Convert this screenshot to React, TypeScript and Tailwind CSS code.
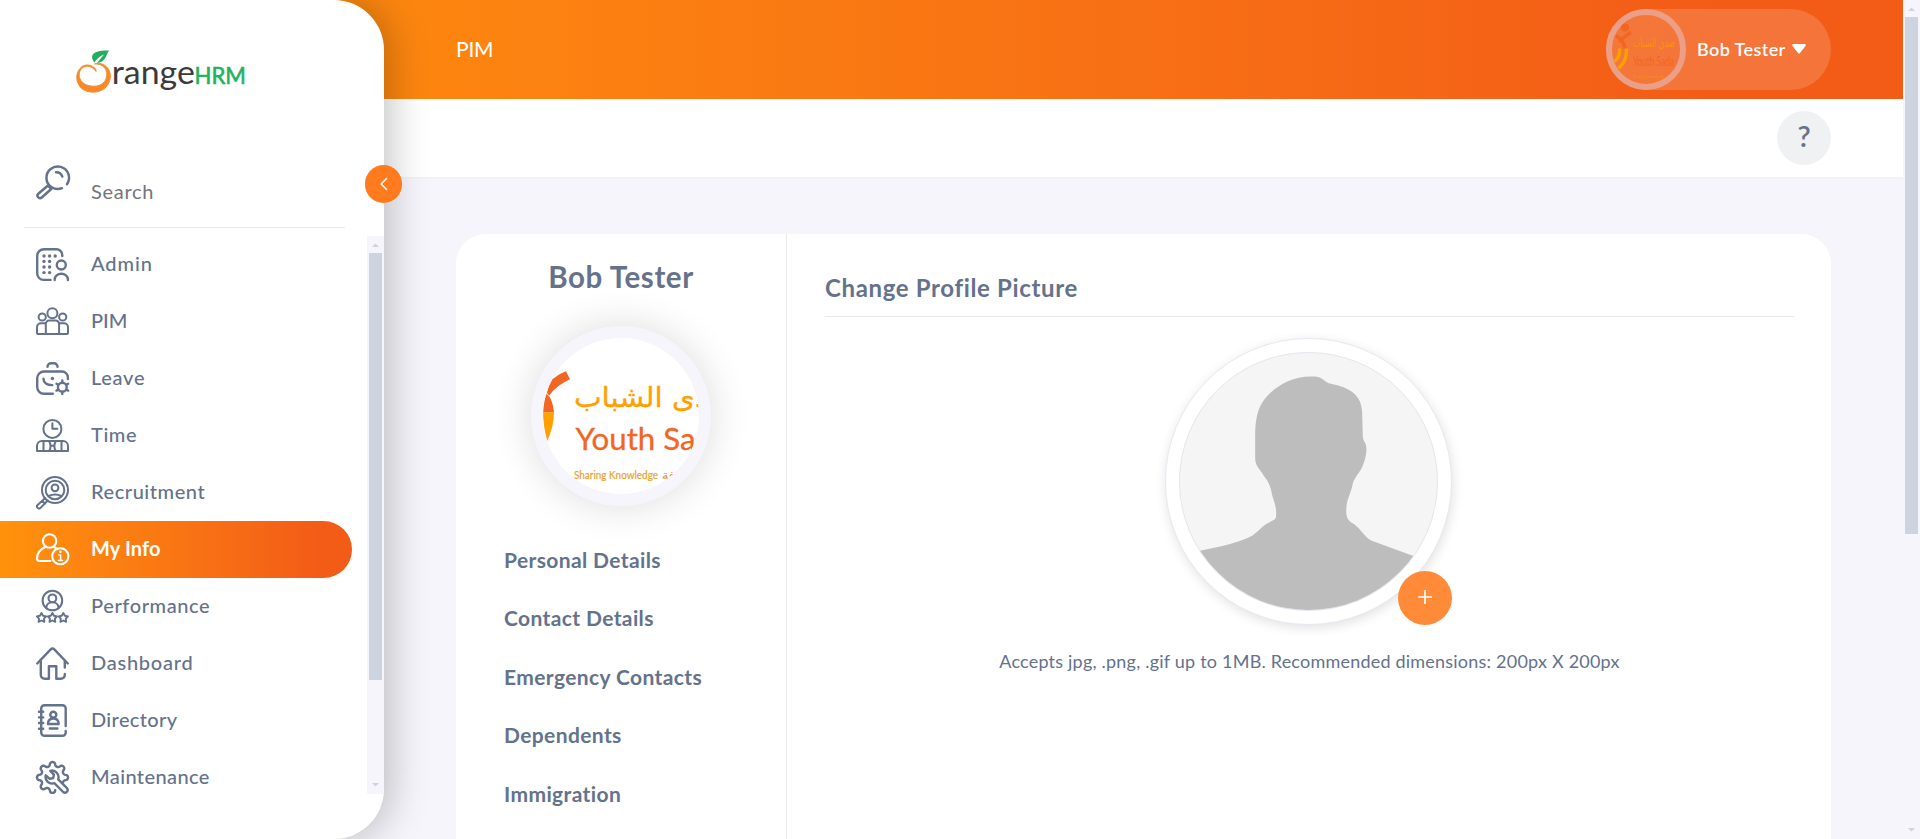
import type { ReactNode } from "react";

const polar = (cx: number, cy: number, r: number, a: number) =>
  `${(cx + r * Math.cos(a)).toFixed(2)} ${(cy + r * Math.sin(a)).toFixed(2)}`;

const star = (cx: number, cy: number, outer: number, inner: number, points: number) =>
  "M" +
  Array.from({ length: points * 2 }, (_, i) =>
    polar(cx, cy, i % 2 ? inner : outer, -Math.PI / 2 + (i * Math.PI) / points)
  ).join("L") +
  "Z";

const cog =
  "M" +
  Array.from({ length: 131 }, (_, i) => {
    const a = ((78 + i * 2.35) * Math.PI) / 180;
    const wave = Math.cos(8 * (a + Math.PI / 2));
    return polar(16.5, 16.5, 13.5 + 2 * Math.sign(wave) * Math.pow(Math.abs(wave), 0.55), a);
  }).join("L");

function Icon({ children, w = 2 }: { children: ReactNode; w?: number }) {
  return (
    <svg
      className="h-[33px] w-[33px] shrink-0 overflow-visible"
      viewBox="0 0 33 33"
      fill="none"
      stroke="currentColor"
      strokeWidth={w}
      strokeLinecap="round"
      strokeLinejoin="round"
    >
      {children}
    </svg>
  );
}

const SearchIcon = () => (
  <Icon w={2.5}>
    <path d="M31 18.2A11.3 11.3 0 1 0 26 22.2" />
    <path d="M20 6.2q5 0 6.3 4.3" />
    <path d="M12 19.5L2 28a2.6 2.6 0 0 0 3.8 3.5L15.500 22.800M12 19.500l3 3.300" />
  </Icon>
);

const items: { label: string; tracking: string; icon: ReactNode }[] = [
  {
    label: "Admin",
    tracking: "tracking-[0.9px]",
    icon: (
      <Icon w={2.4}>
        <path d="M26.3 8V7.200a6 6 0 0 0-6-6H8a6.800 6.800 0 0 0-6.800 6.800V25.500A6.400 6.400 0 0 0 7.600 31.900H14.500" />
        <circle cx="25.300" cy="17" r="4.500" />
        <path d="M18.700 32v-.7a6.600 5.600 0 0 1 13.200 0v.7" />
        <g fill="currentColor" stroke="none">
          {[[8, 8], [13.6, 8], [19.2, 8], [8, 13.4], [13.6, 13.4], [8, 19], [13.6, 19], [8, 24.6], [13.6, 24.6]].map(([x, y]) => (
            <circle key={`${x}-${y}`} cx={x} cy={y} r="1.700" />
          ))}
        </g>
      </Icon>
    ),
  },
  {
    label: "PIM",
    tracking: "tracking-[0px]",
    icon: (
      <Icon w={2}>
        <circle cx="16.400" cy="8.200" r="5" />
        <circle cx="6.200" cy="12" r="3.600" />
        <circle cx="26.700" cy="12" r="3.600" />
        <path d="M9.800 29V19a3.500 3.500 0 0 1 3.500-3.500h6.300A3.500 3.500 0 0 1 23.100 19V29" />
        <path d="M9.800 18.300H5a4 4 0 0 0-4 4V27.500q0 1.600 1.600 1.600H30.400q1.600 0 1.600-1.600V22.300a4 4 0 0 0-4-4H23.100" />
      </Icon>
    ),
  },
  {
    label: "Leave",
    tracking: "tracking-[0.7px]",
    icon: (
      <Icon w={2.4}>
        <path d="M11.500 4.800a3.500 3.500 0 0 1 3.500-3.500h3a3.500 3.500 0 0 1 3.500 3.500" />
        <path d="M31.900 17V15.500a6 6 0 0 0-6-6H8a6.800 6.800 0 0 0-6.800 6.800V25A6.800 6.800 0 0 0 8 31.800H16.800" />
        <path d="M7.500 16.800c0 4 3.500 6.300 8.800 6.300" />
        <circle cx="16.400" cy="16.500" r="1.700" fill="currentColor" stroke="none" />
        <circle cx="26.300" cy="25.200" r="4.400" />
        <path d="M26.300 20.500v-2M26.300 30v2M30.400 22.800l1.700-1M22.200 27.600l-1.700 1M30.400 27.600l1.700 1M22.200 22.800l-1.700-1" />
      </Icon>
    ),
  },
  {
    label: "Time",
    tracking: "tracking-[0.6px]",
    icon: (
      <Icon w={2}>
        <circle cx="16.400" cy="9.900" r="9" />
        <path d="M16.400 4.300v5.500h5" />
        <path d="M1 32V27a5 5 0 0 1 5-5H27a5 5 0 0 1 5 5V32Z" />
        <path d="M7.500 23V32M25.500 23V32M13.300 22.500q2.500 4.700 0 9.400M19.600 22.500q-2.500 4.700 0 9.400M14.800 26.800h3.300" />
      </Icon>
    ),
  },
  {
    label: "Recruitment",
    tracking: "tracking-[0.55px]",
    icon: (
      <Icon w={2}>
        <circle cx="19" cy="14" r="13" />
        <circle cx="19" cy="14" r="9.300" />
        <circle cx="19" cy="11.800" r="3.400" />
        <path d="M12.800 20q6.200-3 12.400 0" />
        <path d="M9.300 22L1.600 29a2 2 0 0 0 2.900 2.900L11.800 24.500M6.300 25l2.700 2.700" />
      </Icon>
    ),
  },
  {
    label: "My Info",
    tracking: "tracking-[0.1px]",
    icon: (
      <Icon w={2.1}>
        <circle cx="13.600" cy="8" r="6.700" />
        <path d="M9 14C4 16.500 1 21 1 25.500Q1 28 3.500 28H14.500M18 14q1.500.700 2.500 1.500" />
        <circle cx="24.300" cy="23.200" r="8.100" />
        <path d="M22.800 22h1.800v5.300M22.500 27.500h4" strokeWidth="1.600" />
        <circle cx="24.300" cy="18.800" r="1.400" fill="currentColor" stroke="none" />
      </Icon>
    ),
  },
  {
    label: "Performance",
    tracking: "tracking-[0.6px]",
    icon: (
      <Icon w={2}>
        <circle cx="16.400" cy="10.500" r="9.800" />
        <circle cx="16.400" cy="8.300" r="3.900" />
        <path d="M10.300 17.600c.5-7 11.700-7 12.200 0" />
        {[5.5, 16.4, 27.3].map((x) => (
          <path key={x} d={star(x, 27.9, 4.9, 2.6, 5)} strokeWidth="1.900" />
        ))}
      </Icon>
    ),
  },
  {
    label: "Dashboard",
    tracking: "tracking-[0.75px]",
    icon: (
      <Icon w={2.4}>
        <path d="M1.200 16.500L14.700 2.300q1.800-1.700 3.600 0L31.800 16.500" />
        <path d="M4.800 14V28a3.800 3.800 0 0 0 3.800 3.800H12.900V19.300h7.400V31.800H25a3.800 3.800 0 0 0 3.800-3.800V27M28.800 14V20.500" />
      </Icon>
    ),
  },
  {
    label: "Directory",
    tracking: "tracking-[0.35px]",
    icon: (
      <Icon w={2.4}>
        <path d="M29.700 22V4.500a3.300 3.300 0 0 0-3.300-3.300H8.500A3.300 3.300 0 0 0 5.200 4.500V28.500A3.300 3.300 0 0 0 8.500 31.800H26.500a3.200 3.200 0 0 0 3.200-3.200V27" />
        <path d="M3 7.700h4.200M3 13.400h4.200M3 19h4.200M3 24.800h4.200" />
        <circle cx="17.300" cy="10.800" r="3" />
        <path d="M12 20v-.8q.5-4.700 5.300-4.700t5.300 4.700v.8ZM13.800 24.500h7.600" />
      </Icon>
    ),
  },
  {
    label: "Maintenance",
    tracking: "tracking-[0.4px]",
    icon: (
      <Icon w={2.4}>
        <path d={cog} />
        <path d="M14.300 9.800a6.600 6.600 0 0 1 7.900 8.500L31 27.200a2.700 2.700 0 0 1-3.800 3.800L18.300 22.200a6.600 6.600 0 0 1-8.500-7.900l3.900 3.500 3.500-.7.700-3.500z" />
      </Icon>
    ),
  },
];

function Logo() {
  return (
    <svg className="h-[50px] w-[174px]" viewBox="74 47 174 50" fontFamily="Lato, sans-serif">
      <path
        fillRule="evenodd"
        fill="#f68a2b"
        stroke="#f68a2b"
        strokeWidth="0.900"
        strokeLinejoin="round"
        d="M96 69.500C92 63.800 84 63.400 80 68.400C74.800 74.500 76 83.500 82 88.800C88 93.300 98 93.300 104 88.800C111 83.500 112.500 73.500 107.400 67.700C104 63.600 98 62.400 94.500 64C101 63.500 106 67 106.800 73C107.300 81.500 101.500 86.200 94 86.200C86 86.200 80.500 82.500 79.300 76.500C78.800 70.800 81.500 67 86 66.400C90 66 93.500 67.700 96 71.500Z"
      />
      <path fill="#22ae5f" d="M94.500 62.500C89 55.500 93 50 109 50.500C106 55 105.500 62.500 97 63L104 54.500C99.500 56.500 96.500 59 94.500 62.500Z" />
      <text x="111.800" y="84" fontSize="33.500" textLength="83" lengthAdjust="spacingAndGlyphs" fill="#3b3a3d">range</text>
      <text x="194.500" y="83.600" fontSize="22.500" textLength="51.500" lengthAdjust="spacingAndGlyphs" fill="#22b262" stroke="#22b262" strokeWidth=".6">HRM</text>
    </svg>
  );
}

function SidebarScrollbar() {
  return (
    <div className="flex w-[17px] flex-col items-center bg-[#f6f5fb]">
      <svg className="h-[17px] w-[17px]" viewBox="0 0 17 17"><path d="M5 11h7L8.500 7.500Z" fill="#ced4df" /></svg>
      <div className="h-[427px] w-[13px] bg-[#ced4df]" />
      <svg className="mt-auto h-[17px] w-[17px]" viewBox="0 0 17 17"><path d="M5 6h7L8.500 9.500Z" fill="#ced4df" /></svg>
    </div>
  );
}

function Sidebar() {
  return (
    <aside className="relative z-20 flex h-[839px] w-[384px] shrink-0 flex-col rounded-r-[50px] bg-white shadow-[5px_0_40px_rgba(0,0,0,0.25)]">
      <div className="pt-[47px] pl-[74px]"><Logo /></div>
      <div className="mt-[58px] mr-[39px] ml-6 flex h-[73px] gap-[22px] border-b border-[#e8e9ee] pt-[11px] pl-3 text-[#64728c]">
        <SearchIcon />
        <span className="pt-[10px] text-[20px] leading-[30px] tracking-[0.7px] text-[#74757a]">Search</span>
      </div>
      <button className="absolute top-[165px] left-[365px] flex h-[38px] w-[37px] items-center justify-center rounded-full bg-[#ff7b1d] text-white">
        <svg className="h-[14px] w-2" viewBox="0 0 8 14" fill="none" stroke="currentColor" strokeWidth="1.500"><path d="M7 1L1.200 7L7 13" /></svg>
      </button>
      <div className="mt-2 flex h-[558px]">
        <nav className="flex flex-1 flex-col overflow-hidden">
          {items.map((it) => {
            const active = it.label === "My Info";
            return (
              <a
                key={it.label}
                className={
                  active
                    ? "flex h-[57px] w-[352px] shrink-0 items-center gap-[22px] rounded-r-full bg-linear-to-r from-[#ff920b] to-[#f35c17] to-90% pl-9 font-bold text-white"
                    : "flex h-[57px] w-[352px] shrink-0 items-center gap-[22px] pl-9 font-medium text-[#64728c]"
                }
              >
                {it.icon}
                <span className={`pb-[3px] text-[20px] leading-[30px] ${it.tracking}`}>{it.label}</span>
              </a>
            );
          })}
        </nav>
        <SidebarScrollbar />
      </div>
    </aside>
  );
}

function YouthLogo() {
  return (
    <svg className="h-full w-full rounded-full" viewBox="0 0 156 156">
      <path fill="#f26522" d="M27 41.300L23 33.300Q16 35.500 9.300 41.300Q5 48 3.700 55.300Q0 64 0 74.300H11Q10 64 6 57.700Q14 47 27 41.300Z" />
      <path fill="#ff9f00" d="M0 74.300H11Q11 88 4.300 103Q0 88 0 74.300Z" />
      <path d="M3.300 54.500l3 4" stroke="#fff" strokeWidth=".8" />
      <text x="31" y="68.500" fontSize="28" fill="#ff9f00" stroke="#ff9f00" strokeWidth=".3" fontFamily="'DejaVu Sans', sans-serif" textLength="134" lengthAdjust="spacingAndGlyphs">دى الشباب</text>
      <text x="32.500" y="112" fontSize="31" fill="#f26522" stroke="#f26522" strokeWidth=".3" fontFamily="Lato, sans-serif" textLength="120" lengthAdjust="spacingAndGlyphs">Youth Sa</text>
      <text x="31" y="140.500" fontSize="10.500" fill="#eda22c" stroke="#eda22c" strokeWidth=".2" fontFamily="Lato, sans-serif" textLength="84" lengthAdjust="spacingAndGlyphs">Sharing Knowledge</text>
      <text x="119" y="140.500" fontSize="11" fill="#f08050" fontFamily="'DejaVu Sans', sans-serif" textLength="13" lengthAdjust="spacingAndGlyphs">فة</text>
    </svg>
  );
}

function SmallYouthLogo() {
  return (
    <svg className="h-full w-full rounded-full" viewBox="0 0 68 68">
      <g fill="none" strokeWidth="3.500">
        <circle cx="13" cy="12" r="4" fill="#f26522" stroke="none" />
        <path d="M4 20q8 5 9 13M19 17q-9 5-11 10" stroke="#f26522" />
        <path d="M7.500 33q1 8-5 13M14.500 33q1 12-8 20" stroke="#ff9f00" />
      </g>
      <text x="21" y="31" fontSize="13" fill="#fa9010" fontFamily="'DejaVu Sans', sans-serif" textLength="42" lengthAdjust="spacingAndGlyphs">صدى الشباب</text>
      <text x="21" y="50" fontSize="14" fill="#f26522" fontFamily="Lato, sans-serif" textLength="41" lengthAdjust="spacingAndGlyphs">Youth Sada</text>
      <text x="21" y="62" fontSize="4.500" fill="#fa9010" fontFamily="Lato, sans-serif" textLength="32" lengthAdjust="spacingAndGlyphs">Sharing Knowledge</text>
    </svg>
  );
}

function Header() {
  return (
    <header className="-ml-[384px] flex h-[99px] items-center justify-between bg-linear-to-r from-[#ff920b] to-[#f35c17] to-90% pr-[72px] pl-[456px] text-white">
      <h6 className="pb-px text-[21px] tracking-[-0.2px]">PIM</h6>
      <div className="flex h-[81px] w-[225px] items-center rounded-full bg-white/15">
        <div className="h-[81px] w-20 shrink-0 rounded-full border-6 border-[#ec9f87]"><SmallYouthLogo /></div>
        <span className="ml-[11px] text-[18px] font-semibold tracking-[0.4px]">Bob Tester</span>
        <svg className="mb-0.5 ml-[6px] h-[10px] w-[14px]" viewBox="0 0 14 10"><path d="M1 0H13Q14.500.5 13.500 2L8 9Q7 10 6 9L.5 2Q-.5.5 1 0Z" fill="currentColor" /></svg>
      </div>
    </header>
  );
}

const tabs = ["Personal Details", "Contact Details", "Emergency Contacts", "Dependents", "Immigration"];

function ProfileCard() {
  return (
    <section className="mt-[57px] mr-[72px] ml-[72px] flex h-[605px] rounded-t-[30px] bg-white text-[#64728c]">
      <div className="flex w-[331px] flex-col items-center border-r border-[#e8e8ee]">
        <h2 className="mt-[23px] text-[29.500px] leading-[40px] font-bold tracking-[0.6px]">Bob Tester</h2>
        <div className="mt-[29px] h-[180px] w-[180px] rounded-full border-12 border-[#f6f5fb] bg-white shadow-[0_0_40px_rgba(0,0,0,0.14)]">
          <YouthLogo />
        </div>
        <div className="mt-[24px] w-full pl-12">
          {tabs.map((t) => (
            <a key={t} className="flex h-[58.500px] items-center text-[21px] font-bold tracking-[0.38px]">{t}</a>
          ))}
        </div>
      </div>
      <div className="flex flex-1 flex-col pr-[37px] pl-[38px]">
        <h3 className="mt-[37px] border-b border-[#e8e8ee] pb-[11px] text-[24px] leading-[34px] font-bold tracking-[0.65px]">Change Profile Picture</h3>
        <div className="relative mt-[21px] mr-[2px] h-[287px] w-[287px] self-center rounded-full border border-[#e8e8f2] bg-white p-[13px] shadow-[1px_3px_12px_rgba(0,0,0,0.12)]">
          <svg className="h-[259px] w-[259px] rounded-full border border-[#e4e6ee] bg-[#f5f5f5]" viewBox="149 97 776 776">
            <path
              fill="#bdbdbd"
              d="M149 705L213 693C270 683 330 668 368 648C385 636 400 618 412 612C424 604 440 602 439 590C442 555 428 540 424 510C416 480 405 476 396 458C385 442 376 435 376 415V345C376 300 384 265 400 243C425 205 480 168 545 168C585 166 580 185 605 190C640 198 650 202 668 214C690 230 697 250 699 275L701 350C703 368 712 365 712 390C711 410 706 425 699 442C690 460 675 475 671 490C666 520 652 535 651 570C650 600 660 605 675 614C695 628 705 652 728 664L852 709L925 740V873H149Z"
            />
          </svg>
          <button className="absolute right-[-1px] bottom-[-1px] flex h-[54px] w-[54px] items-center justify-center rounded-full bg-[#ff8a37] pb-[3px] text-white">
            <svg className="h-[14px] w-[14px]" viewBox="0 0 14 14" stroke="currentColor" strokeWidth="1.700" strokeLinecap="round"><path d="M7 .8V13.200M.8 7H13.200" /></svg>
          </button>
        </div>
        <p className="mt-[22px] text-center text-[18px] leading-[28px] tracking-[0.21px] whitespace-nowrap">
          Accepts jpg, .png, .gif up to 1MB. Recommended dimensions: 200px X 200px
        </p>
      </div>
    </section>
  );
}

function PageScrollbar() {
  return (
    <div className="flex w-[17px] shrink-0 flex-col items-center bg-[#f6f5fb]">
      <svg className="h-[17px] w-[17px]" viewBox="0 0 17 17"><path d="M5 11h7L8.500 7.500Z" fill="#ced4df" /></svg>
      <div className="h-[517px] w-[13px] bg-[#ced4df]" />
      <svg className="mt-auto h-[17px] w-[17px]" viewBox="0 0 17 17"><path d="M5 6h7L8.500 9.500Z" fill="#ced4df" /></svg>
    </div>
  );
}

export default function App() {
  return (
    <div className="flex h-[839px] w-[1920px] overflow-hidden bg-[#f6f5fb] font-['Lato','Noto_Sans',sans-serif]">
      <Sidebar />
      <main className="min-w-0 flex-1">
        <Header />
        <div className="flex h-[78px] items-center justify-end bg-white pr-[72px] shadow-[0_1px_2px_rgba(0,0,0,0.03)]">
          <button className="flex h-[54px] w-[54px] items-center justify-center rounded-full bg-[#eff1f3] pb-1 text-[29px] font-semibold text-[#64728c]">?</button>
        </div>
        <ProfileCard />
      </main>
      <PageScrollbar />
    </div>
  );
}
